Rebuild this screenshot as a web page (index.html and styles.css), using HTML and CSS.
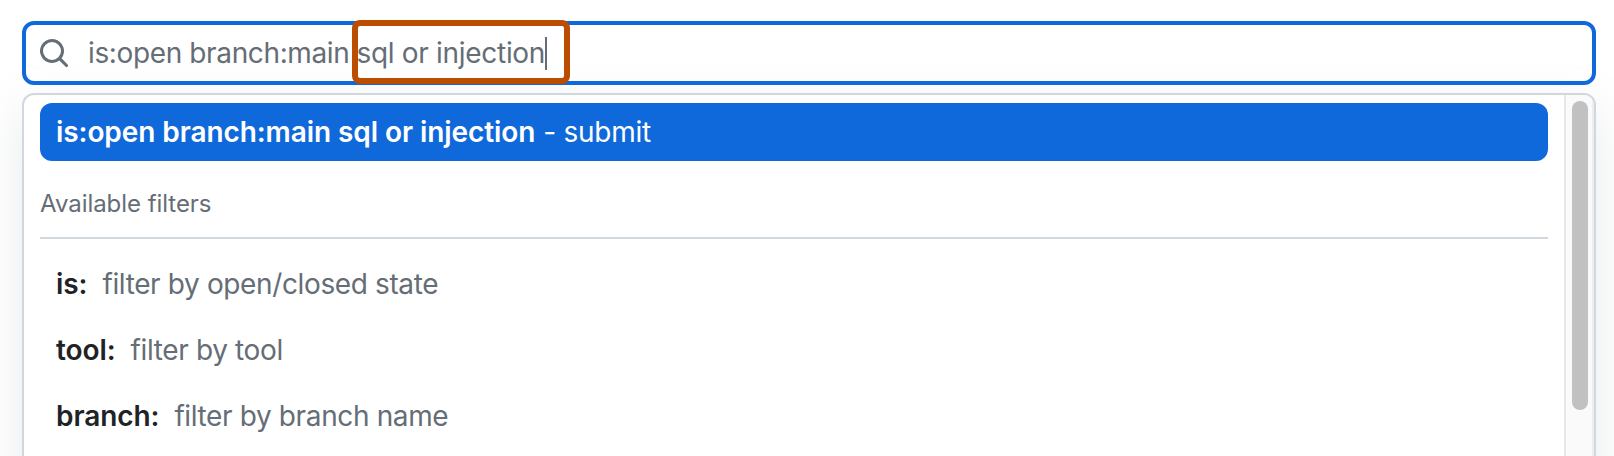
FILE: index.html
```html
<!DOCTYPE html>
<html lang="en">
<head>
<meta charset="utf-8">
<title>Search alerts</title>
<link rel="stylesheet" href="styles.css">
</head>
<body>
<main class="page">
  <div class="search">
    <svg class="search-icon" viewBox="0 0 16 16" aria-hidden="true"><path fill-rule="evenodd" d="M11.5 7a4.499 4.499 0 11-8.998 0A4.499 4.499 0 0111.5 7zm-.82 4.74a6 6 0 111.06-1.06l3.04 3.04a.75.75 0 11-1.06 1.06l-3.04-3.04z"/></svg>
    <div class="query"><span class="query-filters">is:open branch:main</span><span class="query-term">sql or injection</span><span class="caret"></span></div>
    <div class="highlight"></div>
  </div>
  <section class="menu">
    <div class="menu-body">
      <div class="submit"><b>is:open branch:main sql or injection</b><span class="submit-hint">- submit</span></div>
      <h2 class="heading"><span>Available filters</span></h2>
      <ul class="filters">
        <li class="filter"><b>is:</b><span>filter by open/closed state</span></li>
        <li class="filter"><b>tool:</b><span>filter by tool</span></li>
        <li class="filter"><b>branch:</b><span>filter by branch name</span></li>
      </ul>
    </div>
    <div class="track"><div class="thumb"></div></div>
  </section>
</main>
</body>
</html>
```
FILE: styles.css
```css
* { box-sizing: border-box; }
body {
  margin: 0;
  background: #fff;
  color: #1f2328;
  font-family: Inter, "Liberation Sans", sans-serif;
  font-size: 28px;
  letter-spacing: -0.37px;
}
.page { height: 456px; padding: 21px 18px 0 22px; overflow: hidden; }
.search {
  position: relative;
  display: flex;
  align-items: center;
  height: 64px;
  padding-left: 12px;
  border: 4px solid #0f69da;
  border-radius: 12px;
  color: #656d76;
}
.search-icon { width: 32px; height: 32px; margin-right: 18px; fill: #656d76; }
.query { display: flex; align-items: center; line-height: 56px; white-space: nowrap; }
.query-filters { margin-right: 7px; }
.query-term { letter-spacing: -0.3px; }
.caret { width: 2px; height: 33px; background: #656d76; }
.highlight {
  position: absolute;
  left: 326px;
  top: -5px;
  width: 218px;
  height: 64px;
  border: 6px solid #bc4c00;
  border-radius: 8px;
}
.menu {
  display: flex;
  height: 520px;
  margin-top: 8px;
  border: 2px solid #d0d7de;
  border-radius: 12px;
  background: #fff;
  box-shadow: 0 16px 48px rgba(140, 149, 159, 0.2);
  overflow: hidden;
}
.menu-body { flex: 1; padding: 8px 16px 0; }
.submit {
  display: flex;
  align-items: center;
  gap: 8px;
  height: 58px;
  padding-left: 16px;
  border-radius: 12px;
  background: #0f69da;
  color: #fff;
}
.submit-hint { letter-spacing: -0.25px; }
b { font-weight: 600; letter-spacing: -0.08px; }
.heading {
  display: flex;
  align-items: center;
  height: 78px;
  margin: 0;
  padding-top: 8px;
  border-bottom: 2px solid #d0d7de;
  color: #656d76;
  font-size: 24px;
  font-weight: 400;
  letter-spacing: -0.05px;
}
.filters { margin: 0; padding: 12px 0 0 16px; list-style: none; }
.filter { display: flex; align-items: center; gap: 15px; height: 66px; color: #656d76; }
.filter b { color: #1f2328; }
.track {
  width: 30px;
  padding: 6px 0 0 6px;
  border-left: 2px solid #e8e8e8;
  border-right: 2px solid #ededed;
  background: #fafafa;
}
.thumb { width: 16px; height: 309px; border-radius: 8px; background: #c1c1c1; }
```
